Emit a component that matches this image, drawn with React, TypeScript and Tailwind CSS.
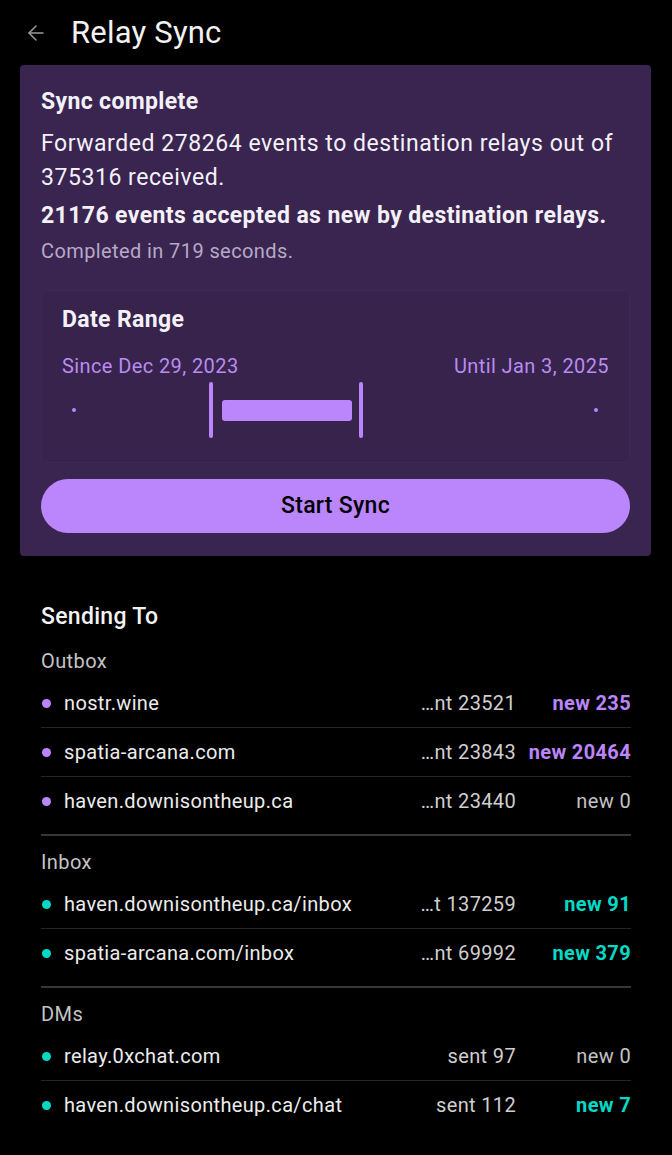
import { ArrowLeft } from 'lucide-react'

type Relay = {
  url: string
  sent: string
  accepted: string
  hot: boolean
}

type Group = {
  title: string
  dot: string
  hotText: string
  relays: Relay[]
}

const groups: Group[] = [
  {
    title: 'Outbox',
    dot: 'bg-[#bb86fc]',
    hotText: 'text-[#bb86fc]',
    relays: [
      { url: 'nostr.wine', sent: '…nt 23521', accepted: 'new 235', hot: true },
      { url: 'spatia-arcana.com', sent: '…nt 23843', accepted: 'new 20464', hot: true },
      { url: 'haven.downisontheup.ca', sent: '…nt 23440', accepted: 'new 0', hot: false },
    ],
  },
  {
    title: 'Inbox',
    dot: 'bg-[#03dac6]',
    hotText: 'text-[#03dac6]',
    relays: [
      { url: 'haven.downisontheup.ca/inbox', sent: '…t 137259', accepted: 'new 91', hot: true },
      { url: 'spatia-arcana.com/inbox', sent: '…nt 69992', accepted: 'new 379', hot: true },
    ],
  },
  {
    title: 'DMs',
    dot: 'bg-[#03dac6]',
    hotText: 'text-[#03dac6]',
    relays: [
      { url: 'relay.0xchat.com', sent: 'sent 97', accepted: 'new 0', hot: false },
      { url: 'haven.downisontheup.ca/chat', sent: 'sent 112', accepted: 'new 7', hot: true },
    ],
  },
]

function RangeSlider() {
  return (
    <div className="relative h-[56px] w-full">
      <span className="absolute left-[10px] top-[26px] h-[4px] w-[4px] rounded-full bg-[#bb86fc]" />
      <span className="absolute right-[11px] top-[26px] h-[4px] w-[4px] rounded-full bg-[#bb86fc]" />
      <span className="absolute left-[147px] top-0 h-[56px] w-[4px] rounded-full bg-[#bb86fc]" />
      <span className="absolute left-[160px] top-[18px] h-[21px] w-[130px] rounded-[3px] bg-[#bb86fc]" />
      <span className="absolute left-[297px] top-0 h-[56px] w-[4px] rounded-full bg-[#bb86fc]" />
    </div>
  )
}

export default function App() {
  return (
    <div
      className="min-h-[1155px] w-full bg-black text-white"
      style={{ fontFamily: 'Roboto, "Noto Sans", sans-serif' }}
    >
      <header className="flex h-[65px] items-center pl-[24px]">
        <ArrowLeft className="h-[24px] w-[24px] text-[#9a9a9a]" strokeWidth={1.5} />
        <h1 className="ml-[23px] text-[31px] leading-[36px] tracking-[0.2px] text-[#f2f2f2]">Relay Sync</h1>
      </header>

      <section className="ml-[20px] w-[631px] rounded-[4px] bg-[#39254f] px-[21px] pb-[23px] pt-[23px]">
        <h2 className="text-[23px] font-bold leading-[28px] tracking-[0.35px] text-[#f4f0f8]">Sync complete</h2>
        <p className="mt-[11px] text-[23px] leading-[34px] tracking-[0.55px] text-[#f4f0f8]">
          Forwarded 278264 events to destination relays out of 375316 received.
        </p>
        <p className="mt-[4px] text-[23px] font-bold leading-[34px] tracking-[0.4px] text-[#f4f0f8]">
          21176 events accepted as new by destination relays.
        </p>
        <p className="mt-[5px] text-[20px] leading-[26px] tracking-[0.4px] text-[#b7a9c8]">
          Completed in 719 seconds.
        </p>

        <div className="mt-[26px] rounded-[6px] border border-[#3d2a54] bg-[#37234c] px-[20px] pb-[24px] pt-[15px]">
          <h3 className="text-[23px] font-bold leading-[28px] tracking-[0.35px] text-[#f4f0f8]">Date Range</h3>
          <div className="mt-[19px] flex justify-between text-[20px] leading-[26px] tracking-[0.4px] text-[#b98cf0]">
            <span>Since Dec 29, 2023</span>
            <span>Until Jan 3, 2025</span>
          </div>
          <div className="mt-[3px]">
            <RangeSlider />
          </div>
        </div>

        <button className="mt-[16px] flex h-[54px] w-full items-center justify-center rounded-full bg-[#bb86fc] text-[23px] font-medium tracking-[0.3px] text-black">
          Start Sync
        </button>
      </section>

      <section className="mx-[41px] mt-[46px] pb-[30px]">
        <h2 className="text-[23px] font-medium leading-[30px] tracking-[0.3px] text-[#f2f2f2]">Sending To</h2>
        {groups.map((group, gi) => (
          <div key={group.title}>
            {gi > 0 && <div className="mt-[9px] h-[2px] bg-[#363636]" />}
            <h4
              className={`${gi === 0 ? 'mt-[16px]' : 'mt-[13px]'} text-[20px] leading-[26px] tracking-[0.4px] text-[#c4c4c4]`}
            >
              {group.title}
            </h4>
            <div className="mt-[5px]">
              {group.relays.map((relay, ri) => (
                <div key={relay.url}>
                  {ri > 0 && <div className="h-px bg-[#262626]" />}
                  <div className="flex h-[48px] items-center text-[20px] tracking-[0.35px]">
                    <span className={`ml-[1px] h-[9px] w-[9px] shrink-0 rounded-full ${group.dot}`} />
                    <span className="ml-[13px] flex-1 truncate text-[#ececec]">{relay.url}</span>
                    <span className="w-[110px] text-right text-[#cfcfcf]">{relay.sent}</span>
                    <span
                      className={`w-[115px] text-right ${relay.hot ? `font-bold ${group.hotText}` : 'text-[#c4c4c4]'}`}
                    >
                      {relay.accepted}
                    </span>
                  </div>
                </div>
              ))}
            </div>
          </div>
        ))}
      </section>
    </div>
  )
}
